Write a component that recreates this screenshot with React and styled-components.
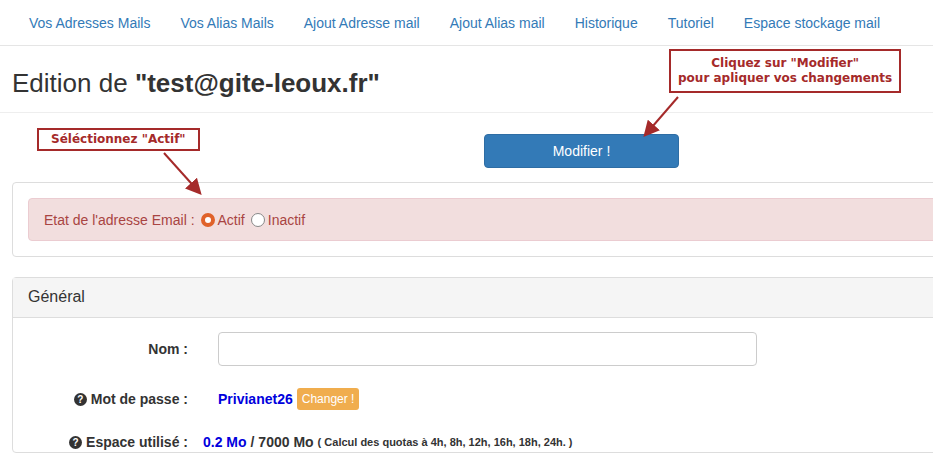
import React from "react";
import styled, { createGlobalStyle } from "styled-components";

const Global = createGlobalStyle`
  body { margin: 0; font-family: "Liberation Sans", Arial, sans-serif; font-size: 14px; color: #333; background: #fff; overflow: hidden; }
`;

const Page = styled.div`
  position: relative;
  width: 960px;
`;

const Nav = styled.ul`
  display: flex;
  margin: 0;
  padding: 0 0 0 14px;
  height: 45px;
  align-items: center;
  list-style: none;
  border-bottom: 1px solid #e5e5e5;
`;

const NavLink = styled.li`
  padding: 0 15px;
  color: #337ab7;
  font-size: 14px;
  white-space: nowrap;
`;

const Title = styled.h1`
  margin: 0;
  padding: 22px 12px 0;
  height: 44px;
  font-size: 26px;
  font-weight: normal;
  border-bottom: 1px solid #eee;
  b { font-weight: bold; }
`;

const ButtonRow = styled.div`
  display: flex;
  padding: 21px 0 0 484px;
  height: 48px;
`;

const PrimaryButton = styled.button`
  width: 195px;
  height: 34px;
  background: #337ab7;
  border: 1px solid #2e6da4;
  border-radius: 4px;
  color: #fff;
  font-family: inherit;
  font-size: 14px;
`;

const Panel = styled.div`
  margin: 0 0 20px 12px;
  border: 1px solid #ddd;
  border-radius: 4px;
  background: #fff;
`;

const PanelBody = styled.div`
  padding: 15px;
`;

const PanelHeading = styled.div`
  background: #f5f5f5;
  border-bottom: 1px solid #ddd;
  padding: 10px 15px;
  height: 19px;
  font-size: 16px;
  color: #333;
`;

const Alert = styled.div`
  background: #f2dede;
  border: 1px solid #ebccd1;
  border-radius: 4px;
  color: #a94442;
  padding: 10px 15px;
  height: 21px;
  display: flex;
  align-items: center;
  gap: 3px;
`;

const Radio = styled.span`
  width: 14px;
  height: 14px;
  border-radius: 50%;
  box-sizing: border-box;
  border: ${(p) => (p.$on ? "4px solid #e0622a" : "1px solid #888")};
  background: #fff;
  display: inline-block;
  margin-left: 3px;
`;

const FormGrid = styled.div`
  display: grid;
  grid-template-columns: 175px 1fr;
  column-gap: 30px;
  row-gap: 0;
  padding: 14px 0 0;
  align-items: center;
`;

const Label = styled.div`
  text-align: right;
  font-weight: bold;
  font-size: 14px;
  height: ${(p) => p.$h}px;
  display: flex;
  align-items: center;
  justify-content: flex-end;
  gap: 4px;
`;

const Value = styled.div`
  height: ${(p) => p.$h}px;
  display: flex;
  align-items: center;
  gap: 4px;
  margin-left: ${(p) => p.$shift || 0}px;
  font-weight: bold;
`;

const Input = styled.div`
  width: 537px;
  height: 32px;
  border: 1px solid #ccc;
  border-radius: 4px;
`;

const Blue = styled.span`
  color: #0000dd;
  font-weight: bold;
`;

const Warn = styled.span`
  background: #f0ad4e;
  color: #fff;
  font-weight: normal;
  font-size: 12px;
  border-radius: 3px;
  padding: 4px 5px;
`;

const Small = styled.span`
  font-size: 11px;
  font-weight: bold;
`;

const Help = styled.span`
  display: inline-flex;
  width: 13px;
  height: 13px;
  border-radius: 50%;
  background: #333;
  color: #fff;
  font-size: 10px;
  font-weight: bold;
  align-items: center;
  justify-content: center;
`;

const Note = styled.div`
  position: absolute;
  left: ${(p) => p.$x}px;
  top: ${(p) => p.$y}px;
  border: 2px solid #a52a2a;
  background: #fff;
  color: #a52a2a;
  font-family: "DejaVu Sans", sans-serif;
  font-weight: bold;
  font-size: 12px;
  text-align: center;
  line-height: 15px;
  padding: ${(p) => p.$pad};
  white-space: nowrap;
`;

const Overlay = styled.svg`
  position: absolute;
  left: 0;
  top: 0;
  pointer-events: none;
`;

const links = ["Vos Adresses Mails", "Vos Alias Mails", "Ajout Adresse mail", "Ajout Alias mail", "Historique", "Tutoriel", "Espace stockage mail"];

export default function App() {
  return (
    <Page>
      <Global />
      <Nav>
        {links.map((l) => <NavLink key={l}>{l}</NavLink>)}
      </Nav>
      <Title>Edition de <b>"test@gite-leoux.fr"</b></Title>
      <ButtonRow><PrimaryButton>Modifier !</PrimaryButton></ButtonRow>
      <Panel>
        <PanelBody>
          <Alert>
            Etat de l'adresse Email : <Radio $on /> Actif <Radio /> Inactif
          </Alert>
        </PanelBody>
      </Panel>
      <Panel>
        <PanelHeading>Général</PanelHeading>
        <FormGrid>
          <Label $h={34}>Nom :</Label>
          <Input />
          <Label $h={66}><Help>?</Help> Mot de passe :</Label>
          <Value $h={66}><Blue>Privianet26</Blue><Warn>Changer !</Warn></Value>
          <Label $h={20}><Help>?</Help> Espace utilisé :</Label>
          <Value $h={20} $shift={-15}><Blue>0.2 Mo</Blue> / 7000 Mo <Small>( Calcul des quotas à 4h, 8h, 12h, 16h, 18h, 24h. )</Small></Value>
        </FormGrid>
      </Panel>
      <Note $x={669} $y={49} $pad="5px 7px">Cliquez sur "Modifier"<br />pour apliquer vos changements</Note>
      <Note $x={37} $y={128} $pad="2px 12px">Séléctionnez "Actif"</Note>
      <Overlay width="933" height="471">
        <defs>
          <marker id="ah" markerWidth="8" markerHeight="8" refX="6" refY="4" orient="auto">
            <path d="M0,0 L8,4 L0,8 Z" fill="#a52a2a" />
          </marker>
        </defs>
        <line x1="678" y1="97" x2="646" y2="134" stroke="#a52a2a" strokeWidth="2" markerEnd="url(#ah)" />
        <line x1="164" y1="153" x2="199" y2="192" stroke="#a52a2a" strokeWidth="2" markerEnd="url(#ah)" />
      </Overlay>
    </Page>
  );
}
